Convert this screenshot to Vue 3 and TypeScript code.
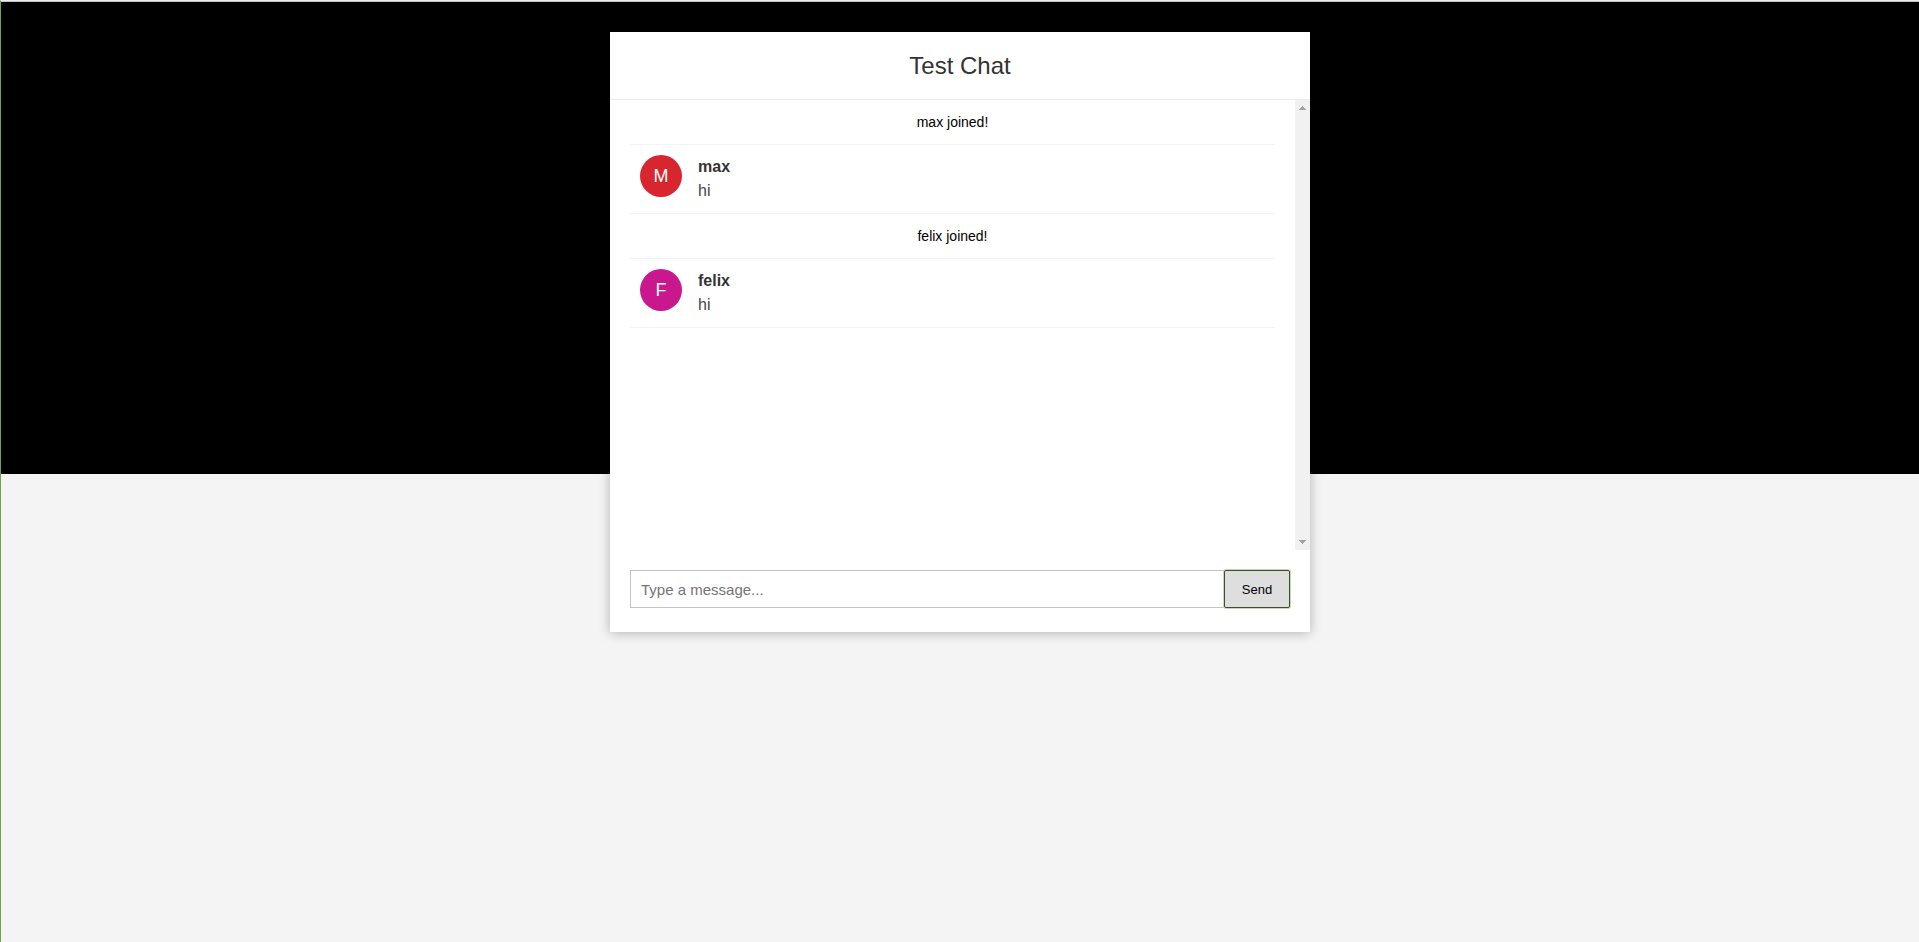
<script setup lang="ts">
import { ref } from 'vue'

interface Message {
  id: number
  type: 'event' | 'post'
  sender: string
  text: string
  color?: string
}

const draft = ref('')
const messages = ref<Message[]>([
  { id: 1, type: 'event', sender: 'max', text: 'max joined!' },
  { id: 2, type: 'post', sender: 'max', text: 'hi', color: '#d7262f' },
  { id: 3, type: 'event', sender: 'felix', text: 'felix joined!' },
  { id: 4, type: 'post', sender: 'felix', text: 'hi', color: '#c9188d' },
])

function send(): void {
  const text = draft.value.trim()
  if (!text) return
  messages.value.push({ id: messages.value.length + 1, type: 'post', sender: 'felix', text, color: '#c9188d' })
  draft.value = ''
}
</script>

<template>
  <div class="page">
    <main class="card">
      <header class="card-header">
        <h2>Test Chat</h2>
      </header>
      <div class="card-body">
        <ul class="messages">
          <li v-for="m in messages" :key="m.id" :class="m.type">
            <p v-if="m.type === 'event'">{{ m.text }}</p>
            <template v-else>
              <span class="avatar" :style="{ backgroundColor: m.color }">{{ m.sender.charAt(0).toUpperCase() }}</span>
              <div>
                <strong class="sender">{{ m.sender }}</strong>
                <p>{{ m.text }}</p>
              </div>
            </template>
          </li>
        </ul>
        <div class="scroll-track" aria-hidden="true">
          <svg width="7" height="4" viewBox="0 0 7 4" shape-rendering="crispEdges"><path d="M3 0h1v1h1v1h1v1h1v1H0V3h1V2h1V1h1z" /></svg>
          <svg width="7" height="4" viewBox="0 0 7 4" shape-rendering="crispEdges"><path d="M0 0h7v1H6v1H5v1H4v1H3V3H2V2H1V1H0z" /></svg>
        </div>
      </div>
      <form class="composer" @submit.prevent="send">
        <input v-model="draft" type="text" placeholder="Type a message..." aria-label="Message" autocomplete="off" />
        <button type="submit">Send</button>
      </form>
    </main>
  </div>
</template>

<style>
body {
  background: #f4f4f4;
}
</style>

<style scoped>
.page {
  box-sizing: border-box;
  min-height: 100vh;
  padding: 31px 0;
  border-top: 1px solid #eceeee;
  border-left: 1px solid #76a04b;
  background: linear-gradient(#000, #000) top / 100% calc(50vh + 2px) no-repeat, #f4f4f4;
  box-shadow: inset 0 1px #bfc4c4;
  font-family: "Liberation Sans", Arial, sans-serif;
  font-size: 16px;
  color: #333;
}
.card {
  max-width: 700px;
  margin: 0 auto;
  background: #fff;
  box-shadow: 0 1px 11px rgba(0, 0, 0, 0.27);
}
.card-header {
  padding: 15px;
  border-bottom: 1px solid #ececec;
  text-align: center;
}
h2 {
  margin: 0;
  font-size: 24px;
  font-weight: 500;
  line-height: 37px;
}
.card-body {
  display: flex;
  min-height: 450px;
}
.messages {
  flex: 1;
  margin: 0;
  padding: 0 20px;
  list-style: none;
}
.messages li {
  padding: 10px;
  border-bottom: 1px solid #f4f4f4;
  line-height: 24px;
}
.messages p {
  margin: 0;
  overflow-wrap: anywhere;
}
.event {
  text-align: center;
  font-size: 14px;
  color: #000;
}
.post {
  display: flex;
  gap: 16px;
}
.post p {
  color: #43464b;
}
.avatar {
  flex: none;
  width: 42px;
  height: 42px;
  border-radius: 50%;
  color: #fff;
  font-size: 18px;
  line-height: 42px;
  text-align: center;
}
.sender {
  display: block;
  font-weight: 600;
}
.scroll-track {
  display: flex;
  flex-direction: column;
  justify-content: space-between;
  align-items: center;
  width: 15px;
  padding: 6px 0;
  box-sizing: border-box;
  background: #f1f1f1;
}
.scroll-track path {
  fill: #a3a3a3;
}
.composer {
  display: flex;
  padding: 20px 20px 24px;
}
input {
  flex: 1;
  min-width: 0;
  height: 38px;
  box-sizing: border-box;
  padding: 0 10px;
  border: 1px solid #c4c4c4;
  border-right: 0;
  background: #fff;
  font: 15px "Liberation Sans", Arial, sans-serif;
  color: #333;
}
input::placeholder {
  color: #757575;
}
button {
  width: 66px;
  height: 38px;
  padding: 0;
  border: 1px solid #36512a;
  border-radius: 2px;
  background: #dedede;
  box-shadow: 0 0 0 1px #c8d8ba;
  font: 13px "Liberation Sans", Arial, sans-serif;
  color: #000;
}
</style>
